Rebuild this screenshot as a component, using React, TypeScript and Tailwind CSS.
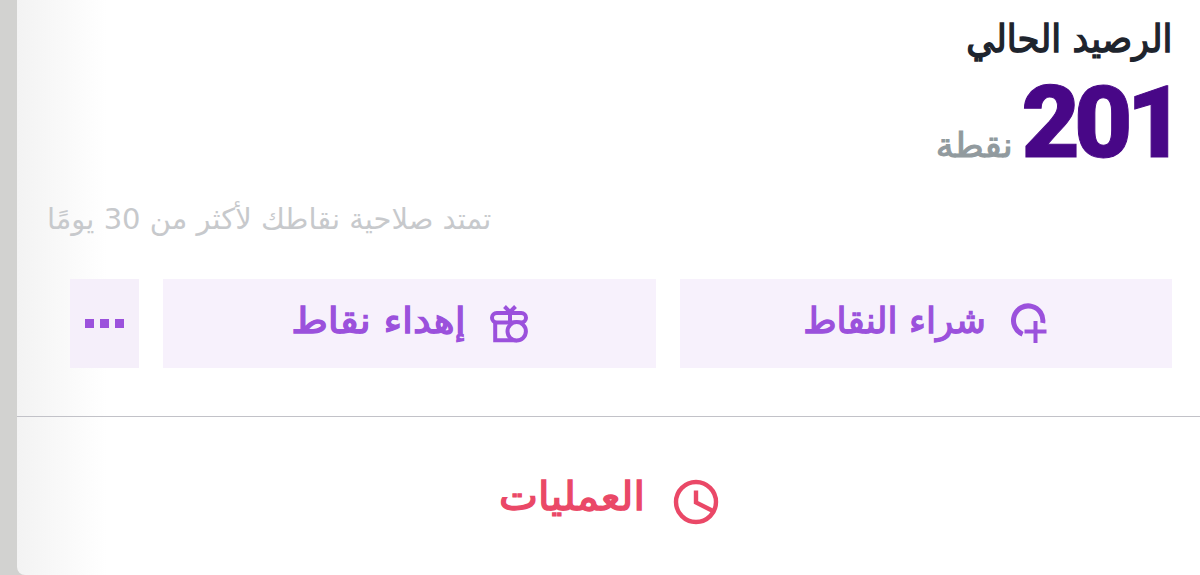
import React from 'react';

const BuyIcon = () => (
  <svg width="38" height="42" viewBox="0 0 38 42" fill="none" stroke="currentColor" strokeWidth="5" className="-mt-1">
    <path d="M12.6 33.2A14.7 14.7 0 1 1 32.7 22" />
    <path d="M14.5 30.5H36.5M25.5 20V42" strokeWidth="4" />
  </svg>
);

const GiftIcon = () => (
  <svg width="38" height="38" viewBox="0 0 38 38" fill="none" stroke="currentColor" strokeWidth="4">
    <rect x="2" y="8" width="34" height="9.5" rx="4.75" />
    <path d="M14.5 1.5L20 7L25.5 1.5M20 7V18" />
    <path d="M5.2 18V35.3H27" />
    <circle cx="26.7" cy="26.3" r="9.2" fill="#f7f1fc" />
  </svg>
);

const ClockIcon = () => (
  <svg width="46" height="46" viewBox="0 0 46 46" fill="none" stroke="currentColor" strokeWidth="4.4">
    <circle cx="23" cy="23" r="20" />
    <path d="M23 11.5V23.5L40 32" />
  </svg>
);

export default function App() {
  return (
    <div
      dir="rtl"
      className="h-[575px] w-full overflow-hidden bg-[#d2d2d0] pl-[17px] font-['DejaVu_Sans',sans-serif]"
    >
      <div className="flex h-full flex-col rounded-bl-lg bg-white bg-linear-to-r from-[#f3f3f3] to-white to-[90px]">
        {/* Balance */}
        <div className="h-[417px] shrink-0 border-b border-[#c2c2c8] pr-7 pt-[14px]">
          <h1 className="h-[60px] whitespace-nowrap text-[38px] leading-[50px] text-[#1e242d] [-webkit-text-stroke:1.4px_currentColor]">
            <span className="inline-block origin-right scale-x-[0.935]">الرصيد الحالي</span>
          </h1>
          <div className="flex h-[126px] items-baseline gap-[9px]">
            <span className="-mr-[7px] font-['Roboto'] text-[101px] font-black leading-[98px] tracking-[-6px] text-[#480787] [-webkit-text-stroke:1px_currentColor]">
              201
            </span>
            <span className="inline-block origin-right scale-x-[1.06] whitespace-nowrap text-[34px] text-[#919a9e] [-webkit-text-stroke:1px_currentColor]">
              نقطة
            </span>
          </div>
          <p className="flex h-[79px] justify-end whitespace-nowrap pl-[30px] text-[29px] leading-[38px] text-[#c7c9cc]">
            <span className="inline-block">تمتد صلاحية نقاطك لأكثر من 30 يومًا</span>
          </p>

          {/* Actions */}
          <div className="flex h-[89px] gap-6 text-[36px] text-[#9b51dc] [-webkit-text-stroke:1.3px_currentColor]">
            <button className="flex w-[492px] items-center gap-6 bg-[#f7f1fc] pr-[124px]">
              <BuyIcon />
              <span className="-mt-1.5 inline-block whitespace-nowrap">شراء النقاط</span>
            </button>
            <button className="flex w-[493px] items-center gap-6 bg-[#f7f1fc] pr-32">
              <GiftIcon />
              <span className="-mt-1.5 inline-block origin-right scale-x-[1.1] whitespace-nowrap">إهداء نقاط</span>
            </button>
            <button className="flex w-[69px] items-center justify-center gap-1.5 bg-[#f5effa]">
              <i className="size-[9px] bg-current" />
              <i className="size-[9px] bg-current" />
              <i className="size-[9px] bg-current" />
            </button>
          </div>
        </div>

        {/* Transactions */}
        <div className="flex grow items-center gap-7 pr-[481px] pt-3 text-[40px] text-[#ea4867]">
          <ClockIcon />
          <span className="-mt-3 inline-block origin-right scale-x-[1.035] whitespace-nowrap [-webkit-text-stroke:1.4px_currentColor]">
            العمليات
          </span>
        </div>
      </div>
    </div>
  );
}
